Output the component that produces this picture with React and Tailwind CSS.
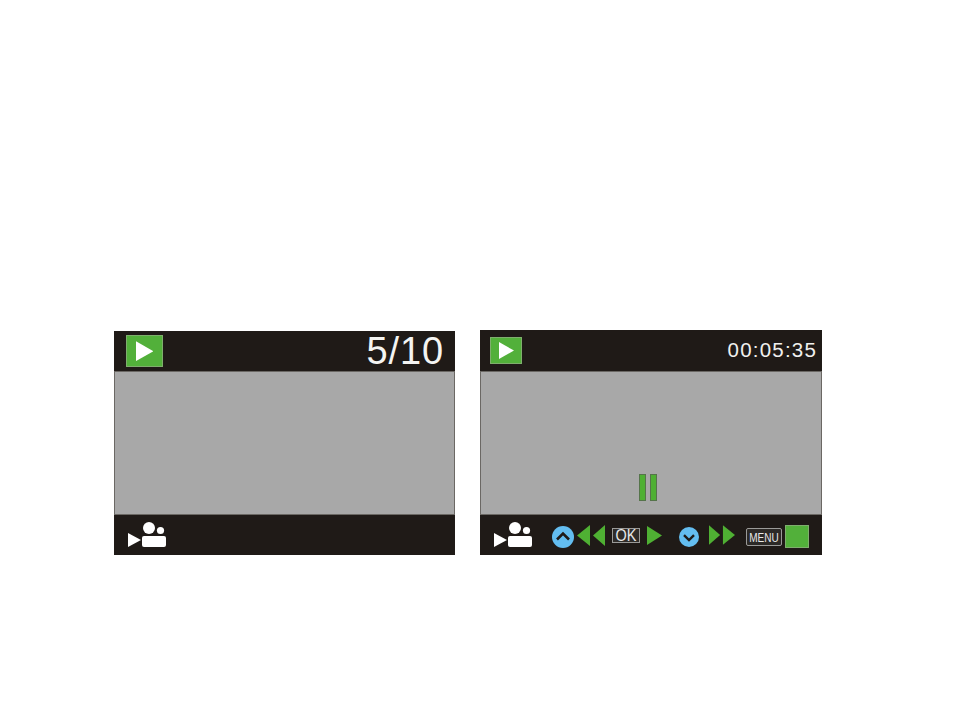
import { useState } from 'react'

const font = { fontFamily: '"Liberation Sans", Arial, sans-serif' }

// 綠色播放圖示
const PlayBadge = ({ className }) => (
  <div className={`flex items-center justify-center bg-[#52b03a] border border-[#7fae6d] ${className}`}>
    <svg viewBox="0 0 16 18" className="w-1/2 h-[68%]">
      <path d="M0 0 L16 9 L0 18 Z" fill="#fff" />
    </svg>
  </div>
)

// 攝影機圖示
const VideoIcon = ({ className }) => (
  <svg viewBox="0 0 38 25" className={className}>
    <path d="M0 11 L13 18 L0 25 Z" fill="#fff" />
    <circle cx="21" cy="6" r="6" fill="#fff" />
    <circle cx="32.5" cy="8.5" r="3.6" fill="#fff" />
    <path d="M16 14 H36 Q38 14 38 16 V23 Q38 25 36 25 H16 Q14 25 14 23 V16 Q14 14 16 14 Z" fill="#fff" />
  </svg>
)

const RoundArrow = ({ down, className }) => (
  <svg viewBox="0 0 22 22" className={className}>
    <circle cx="11" cy="11" r="11" fill="#63bdf0" />
    <path
      d={down ? 'M5.5 9 L11 14.5 L16.5 9' : 'M5 13.5 L11 7.5 L17 13.5'}
      fill="none"
      stroke="#1f1a17"
      strokeWidth="2.6"
    />
  </svg>
)

const Triangles = ({ left, className }) => (
  <svg viewBox="0 0 28 21" className={className}>
    {left ? (
      <>
        <path d="M13 0 V21 L0 10.5 Z" fill="#4fb033" />
        <path d="M28 0 V21 L16 10.5 Z" fill="#4fb033" />
      </>
    ) : (
      <>
        <path d="M0 0 V21 L12 10.5 Z" fill="#4fb033" />
        <path d="M15 0 V21 L28 10.5 Z" fill="#4fb033" />
      </>
    )}
  </svg>
)

export default function App() {
  const [time] = useState('00:05:35')

  return (
    <div className="w-[955px] h-[716px] bg-white pl-[114px] flex items-end pb-[161px] gap-[25px] overflow-hidden" style={font}>
      {/* 左畫面 */}
      <div className="w-[341px] h-[224px] flex flex-col bg-[#1f1a17]">
        <div className="h-[40px] shrink-0 flex items-center justify-between pl-3 pr-[11px]">
          <PlayBadge className="w-[37px] h-[32px]" />
          <span className="text-[38px] leading-none text-[#f4f4f2] tracking-[0.9px] font-light">5/10</span>
        </div>
        <div className="h-[144px] shrink-0 bg-[#a8a8a8] border border-[#6b6864]" />
        <div className="flex-1 flex items-end pl-[14px] pb-2">
          <VideoIcon className="w-[38px] h-[25px]" />
        </div>
      </div>

      {/* 右畫面 */}
      <div className="w-[342px] h-[225px] flex flex-col bg-[#1f1a17]">
        <div className="h-[41px] shrink-0 flex items-center justify-between pl-[10px] pr-[5px]">
          <PlayBadge className="w-[32px] h-[27px]" />
          <span className="text-[20.5px] leading-none text-[#f0f0ee] tracking-[1.2px]">{time}</span>
        </div>
        <div className="h-[144px] shrink-0 bg-[#a8a8a8] border border-[#6b6864] flex justify-center items-end pb-[13px] gap-[4px] pr-[7px]">
          <div className="w-[7px] h-[27px] bg-[#4fb033] border border-[#55744a]" />
          <div className="w-[7px] h-[27px] bg-[#4fb033] border border-[#55744a]" />
        </div>
        <div className="flex-1 flex items-center pl-[14px]">
          <VideoIcon className="w-[38px] h-[25px] mb-[2px]" />
          <RoundArrow className="w-[22px] h-[22px] ml-[20px] mt-[4px]" />
          <Triangles left className="w-[28px] h-[21px] ml-[3px]" />
          <div className="w-[28px] h-[15px] ml-[7px] mt-[1px] bg-[#2f2c29] border border-[#9a9a98] text-[#e8e8e8] text-[14.5px] leading-[13px] text-center">
            <span className="inline-block scale-y-[1.2]">OK</span>
          </div>
          <svg viewBox="0 0 15 19" className="w-[15px] h-[19px] ml-[7px] mt-[1px]">
            <path d="M0 0 V19 L15 9.5 Z" fill="#4fb033" />
          </svg>
          <RoundArrow down className="w-[20px] h-[20px] ml-[17px] mt-[3px]" />
          <Triangles className="w-[26px] h-[20px] ml-[10px]" />
          <div className="w-[36px] h-[18px] ml-[11px] mt-[3px] rounded-[2px] bg-[#2c2926] border border-[#9a9a98] text-[#e8e8e8] text-[10px] leading-[17px] text-center">
            <span className="inline-block scale-y-[1.2]">MENU</span>
          </div>
          <div className="w-[24px] h-[23px] ml-[3px] mt-[3px] bg-[#52b03a] border border-[#7fae6d]" />
        </div>
      </div>
    </div>
  )
}
